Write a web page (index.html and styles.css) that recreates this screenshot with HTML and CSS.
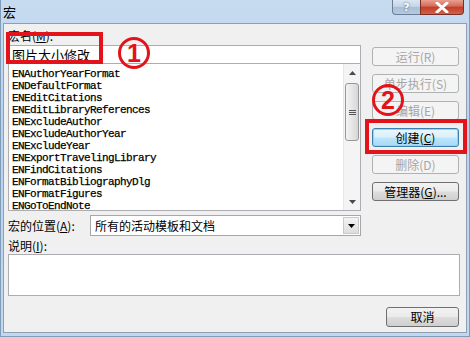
FILE: index.html
```html
<!DOCTYPE html>
<html>
<head>
<meta charset="utf-8">
<link rel="stylesheet" href="styles.css">
</head>
<body>
<div class="window">
  <div class="titlebar">
    <span class="title">宏</span>
    <div class="caption-btns">
      <div class="cap help">?</div>
      <div class="cap close">
        <svg width="14" height="11" viewBox="0 0 14 11"><path d="M2 1 L12 10 M12 1 L2 10" stroke="#fff" stroke-width="3" stroke-linecap="round"/></svg>
      </div>
    </div>
  </div>
  <div class="client">
    <div class="top">
      <div class="left">
        <div class="label name-label">宏名(<u>M</u>):</div>
        <div class="input">图片大小修改</div>
        <div class="list">
          <div class="items">
            <div>ENAuthorYearFormat</div>
            <div>ENDefaultFormat</div>
            <div>ENEditCitations</div>
            <div>ENEditLibraryReferences</div>
            <div>ENExcludeAuthor</div>
            <div>ENExcludeAuthorYear</div>
            <div>ENExcludeYear</div>
            <div>ENExportTravelingLibrary</div>
            <div>ENFindCitations</div>
            <div>ENFormatBibliographyDlg</div>
            <div>ENFormatFigures</div>
            <div>ENGoToEndNote</div>
          </div>
          <div class="vscroll">
            <div class="arrow up"><svg width="7" height="4" viewBox="0 0 7 4"><path d="M0 4 L3.5 0 L7 4 Z" fill="#4a4a4a"/></svg></div>
            <div class="track">
              <div class="thumb"><span class="grip"></span><span class="grip"></span><span class="grip"></span></div>
            </div>
            <div class="arrow down"><svg width="7" height="4" viewBox="0 0 7 4"><path d="M0 0 L7 0 L3.5 4 Z" fill="#4a4a4a"/></svg></div>
          </div>
        </div>
      </div>
      <div class="right">
        <div class="btn disabled">运行(R)</div>
        <div class="btn disabled">单步执行(S)</div>
        <div class="btn disabled">编辑(E)</div>
        <div class="btn default">创建(<u>C</u>)</div>
        <div class="btn disabled">删除(D)</div>
        <div class="btn">管理器(<u>G</u>)...</div>
      </div>
    </div>
    <div class="loc-row">
      <div class="label loc-label">宏的位置(<u>A</u>):</div>
      <div class="select">
        <span class="sel-text">所有的活动模板和文档</span>
        <div class="sel-btn"><svg width="7" height="4" viewBox="0 0 7 4"><path d="M0 0 L7 0 L3.5 4 Z" fill="#000"/></svg></div>
      </div>
    </div>
    <div class="label desc-label">说明(<u>I</u>):</div>
    <div class="textarea"></div>
    <div class="footer">
      <div class="btn cancel">取消</div>
    </div>
  </div>
  <div class="mark box1"></div>
  <div class="mark box2"></div>
  <svg class="circ c1" width="34" height="34" viewBox="0 0 34 34"><circle cx="17" cy="17" r="14.5" fill="none" stroke="#e3131b" stroke-width="3"/><text x="17" y="26" text-anchor="middle" class="digit">1</text></svg>
  <svg class="circ c2" width="34" height="34" viewBox="0 0 34 34"><circle cx="17" cy="17" r="14.5" fill="none" stroke="#e3131b" stroke-width="3"/><text x="17" y="26" text-anchor="middle" class="digit">2</text></svg>
</div>
</body>
</html>
```

FILE: styles.css
```css
* { box-sizing: border-box; }
html, body { margin: 0; padding: 0; }
body {
  width: 470px;
  height: 337px;
  overflow: hidden;
  font-family: "Noto Sans CJK SC", "Liberation Sans", sans-serif;
  font-size: 12px;
  color: #000;
}
u { text-decoration: underline; }
.window {
  position: relative;
  width: 470px;
  height: 337px;
  background: linear-gradient(180deg, #c6dbf0 0%, #b9d2ec 40%, #c3d8ee 100%);
  border: 1px solid #7f9db9;
  border-top: none;
  display: flex;
  flex-direction: column;
}
.titlebar {
  height: 23px;
  display: flex;
  align-items: flex-start;
  justify-content: space-between;
  padding-left: 2px;
}
.title {
  font-size: 13px;
  line-height: 13px;
  margin-top: 5px;
}
.caption-btns {
  display: flex;
  margin-right: 5px;
}
.cap {
  height: 15px;
  display: flex;
  align-items: center;
  justify-content: center;
  border: 1px solid #6d7f95;
  border-top: none;
}
.help {
  width: 28px;
  border-radius: 0 0 0 4px;
  background: linear-gradient(180deg, #dbe6f3 0%, #c2d3e8 50%, #a9bed8 51%, #b6cae2 100%);
  color: #fff;
  font-family: "DejaVu Sans", sans-serif;
  font-weight: bold;
  font-size: 11px;
  text-shadow: 0 0 2px #33465e;
  border-right: none;
}
.close {
  width: 44px;
  border-radius: 0 0 4px 0;
  background: linear-gradient(180deg, #e8a092 0%, #d46a57 45%, #c43b25 50%, #d0624a 100%);
  border-color: #7b2e24;
}
.client {
  flex: 1;
  margin: 0 2px 3px 2px;
  background: #f0f0f0;
  border: 1px solid #8d9fb3;
  padding: 0 0 0 4px;
  display: flex;
  flex-direction: column;
}
.top {
  display: flex;
  padding-top: 3px;
}
.left {
  width: 353px;
  display: flex;
  flex-direction: column;
}
.label {
  font-size: 12px;
  line-height: 14px;
}
.name-label {
  height: 18px;
  padding-top: 2px;
}
.input {
  height: 18px;
  background: #fff;
  border: 1px solid #abadb3;
  border-bottom: none;
  padding-left: 3px;
  font-size: 13px;
  line-height: 17px;
}
.list {
  height: 148px;
  background: #fff;
  border: 1px solid #abadb3;
  display: flex;
}
.items {
  flex: 1;
  padding: 4px 0 0 3px;
  font-family: "Liberation Mono", monospace;
  font-size: 11px;
  letter-spacing: -0.6px;
  line-height: 12px;
  color: #000;
  -webkit-text-stroke: 0.25px #000;
}
.vscroll {
  width: 17px;
  display: flex;
  flex-direction: column;
  background: #f4f4f4;
  border-left: 1px solid #e8e8e8;
}
.arrow {
  height: 17px;
  display: flex;
  align-items: center;
  justify-content: center;
}
.track {
  flex: 1;
  padding: 2px 1px;
}
.thumb {
  height: 58px;
  border: 1px solid #979797;
  border-radius: 3px;
  background: linear-gradient(90deg, #f3f3f3 0%, #e6e6e6 50%, #d6d6d6 100%);
  display: flex;
  flex-direction: column;
  justify-content: center;
  align-items: center;
  gap: 1px;
}
.grip {
  width: 7px;
  height: 1px;
  background: #555;
}
.right {
  width: 87px;
  margin-left: 11px;
  padding-top: 20px;
  display: flex;
  flex-direction: column;
  gap: 8px;
}
.btn {
  height: 19px;
  border: 1px solid #707070;
  border-radius: 3px;
  background: linear-gradient(180deg, #f2f2f2 0%, #ebebeb 48%, #dddddd 52%, #cfcfcf 100%);
  display: flex;
  align-items: center;
  justify-content: center;
  font-size: 12px;
  line-height: 12px;
  color: #000;
}
.btn.disabled {
  border-color: #adb2b5;
  background: #f4f4f4;
  color: #a6a6a6;
}
.btn.default {
  border-color: #3c7fb1;
  box-shadow: inset 0 0 0 1px #8cd7f7;
  background: linear-gradient(180deg, #eaf6fd 0%, #d9f0fc 48%, #bee6fd 52%, #a7d9f5 100%);
}
.loc-row {
  display: flex;
  align-items: center;
  margin-top: 4px;
  height: 21px;
}
.loc-label {
  width: 82px;
}
.select {
  width: 271px;
  height: 21px;
  background: #fff;
  border: 1px solid #a7a6aa;
  display: flex;
  align-items: center;
  justify-content: space-between;
  padding-left: 4px;
}
.sel-text {
  font-size: 12px;
  line-height: 14px;
}
.sel-btn {
  width: 16px;
  height: 17px;
  margin-right: 1px;
  border: 1px solid #c9c9c9;
  background: linear-gradient(180deg, #f3f3f3 0%, #dedede 100%);
  display: flex;
  align-items: center;
  justify-content: center;
}
.desc-label {
  height: 15px;
  margin-top: 3px;
}
.textarea {
  width: 452px;
  height: 42px;
  background: #fff;
  border: 1px solid #abadb3;
}
.footer {
  display: flex;
  justify-content: flex-end;
  width: 452px;
  margin-top: 11px;
}
.btn.cancel {
  width: 73px;
  height: 20px;
  margin-right: 1px;
}
.mark {
  position: absolute;
  border: 4px solid #e3131b;
}
.box1 {
  left: 5px;
  top: 32px;
  width: 97px;
  height: 32px;
}
.box2 {
  left: 364px;
  top: 119px;
  width: 102px;
  height: 35px;
}
.circ {
  position: absolute;
}
.digit {
  fill: #e3131b;
  font-family: "Liberation Sans", sans-serif;
  font-weight: bold;
  font-size: 25px;
}
.c1 { left: 116px; top: 36px; }
.c2 { left: 370px; top: 83px; }
```
